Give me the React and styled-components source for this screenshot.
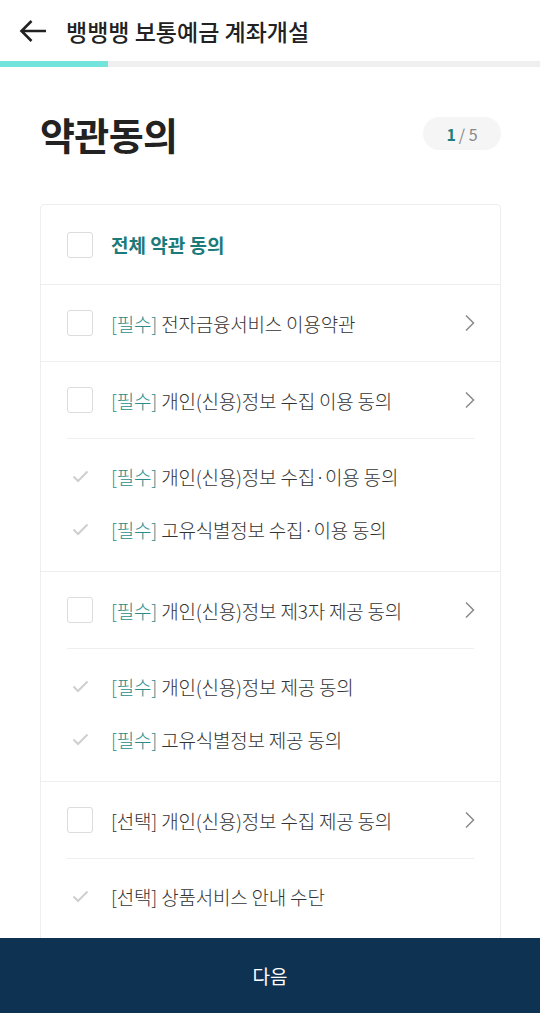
import React from "react";
import styled, { createGlobalStyle } from "styled-components";

const Global = createGlobalStyle`
  html, body { margin: 0; padding: 0; background: #fff; }
  body { font-family: "Noto Sans CJK KR", "Noto Sans", sans-serif; color: #333; }
  * { box-sizing: border-box; }
`;

const Page = styled.div`
  width: 540px;
  padding-bottom: 90px;
`;

const Header = styled.header`
  height: 61px;
  display: flex;
  align-items: center;
  padding-left: 19px;
  gap: 18px;
`;

const HeaderTitle = styled.h1`
  margin: 0;
  font-size: 23px;
  font-weight: 500;
  color: #222;
  letter-spacing: 0;
`;

const Progress = styled.div`
  height: 6px;
  background: #efefef;
`;

const ProgressFill = styled.div`
  height: 100%;
  background: #72e4dc;
`;

const Main = styled.main`
  padding: 0 39px 0 40px;
`;

const TitleRow = styled.div`
  display: flex;
  align-items: center;
  justify-content: space-between;
  height: 137px;
  padding-bottom: 4px;
`;

const PageTitle = styled.h2`
  margin: 0;
  font-size: 38px;
  font-weight: 700;
  color: #222;
  letter-spacing: -0.6px;
`;

const StepBadge = styled.div`
  width: 78px;
  height: 33px;
  border-radius: 17px;
  background: #f5f5f5;
  display: flex;
  align-items: center;
  justify-content: center;
  font-size: 16px;
  color: #888;
  gap: 3px;
`;

const StepCurrent = styled.span`
  color: #1f7f7f;
  font-weight: 700;
`;

const Card = styled.section`
  border: 1px solid #eeeeee;
  border-radius: 4px;
`;

const Group = styled.div`
  border-top: ${(p) => (p.$first ? "none" : "1px solid #eeeeee")};
`;

const Row = styled.div`
  display: flex;
  align-items: center;
  height: ${(p) => (p.$all ? "79px" : "76px")};
  padding: 0 25px 0 26px;
`;

const Box = styled.span`
  width: 26px;
  height: 26px;
  border: 1.5px solid #dcdcdc;
  border-radius: 3px;
  flex: none;
  background: #fff;
`;

const Label = styled.span`
  flex: 1;
  margin-left: 18px;
  font-size: 19px;
  font-weight: ${(p) => (p.$all ? 700 : 300)};
  color: ${(p) => (p.$all ? "#1b7a7a" : "#333")};
  letter-spacing: ${(p) => (p.$all ? "0" : "-0.2px")};
  white-space: nowrap;
`;

const Tag = styled.span`
  color: ${(p) => (p.$optional ? "#333" : "#2b8c8c")};
`;

const SubList = styled.div`
  margin: 0 26px 0 26px;
  border-top: 1px solid #eeeeee;
  padding: 11px 0 15px;
`;

const SubRow = styled.div`
  display: flex;
  align-items: center;
  height: 53px;
`;

const CheckMark = styled.span`
  width: 26px;
  display: flex;
  justify-content: center;
  flex: none;
`;

const Options = styled.div`
  display: flex;
  align-items: center;
  gap: 60px;
  padding: 8px 0 0 44px;
  height: 53px;
`;

const Option = styled.span`
  display: flex;
  align-items: center;
  gap: 10px;
  font-size: 17px;
  font-weight: 300;
  color: #333;
`;

const SmallBox = styled.span`
  width: 26px;
  height: 26px;
  border-radius: 6px;
  background: #eeeeee;
`;

const BottomButton = styled.button`
  position: fixed;
  left: 0;
  right: 0;
  bottom: 0;
  height: 75px;
  border: none;
  background: #0e3252;
  color: #fff;
  font-family: "Noto Sans CJK KR", sans-serif;
  font-size: 19px;
  font-weight: 400;
  padding: 0;
`;

const Chevron = () => (
  <svg width="10" height="18" viewBox="0 0 10 18" fill="none">
    <path d="M1 1.5 L8.5 9 L1 16.5" stroke="#8a8a8a" strokeWidth="1.5" />
  </svg>
);

const Check = () => (
  <svg width="17" height="13" viewBox="0 0 17 13" fill="none">
    <path d="M1.5 6.5 L6 11 L15.5 1.5" stroke="#cfcfcf" strokeWidth="2" />
  </svg>
);

const BackArrow = () => (
  <svg width="29" height="24" viewBox="0 0 29 24" fill="none">
    <path d="M27 12 H3 M12.5 2 L2.5 12 L12.5 22" stroke="#222" strokeWidth="2.6" />
  </svg>
);

const groups = [
  { tag: "[필수]", text: "전자금융서비스 이용약관", subs: [] },
  {
    tag: "[필수]",
    text: "개인(신용)정보 수집 이용 동의",
    subs: [
      { tag: "[필수]", text: "개인(신용)정보 수집·이용 동의" },
      { tag: "[필수]", text: "고유식별정보 수집·이용 동의" },
    ],
  },
  {
    tag: "[필수]",
    text: "개인(신용)정보 제3자 제공 동의",
    subs: [
      { tag: "[필수]", text: "개인(신용)정보 제공 동의" },
      { tag: "[필수]", text: "고유식별정보 제공 동의" },
    ],
  },
  {
    tag: "[선택]",
    optional: true,
    text: "개인(신용)정보 수집 제공 동의",
    subs: [{ tag: "[선택]", optional: true, text: "상품서비스 안내 수단" }],
    options: ["문자메시지", "전자우편"],
  },
];

export default function App() {
  return (
    <Page>
      <Global />
      <Header>
        <BackArrow />
        <HeaderTitle>뱅뱅뱅 보통예금 계좌개설</HeaderTitle>
      </Header>
      <Progress>
        <ProgressFill style={{ width: `${(1 / 5) * 100}%` }} />
      </Progress>
      <Main>
        <TitleRow>
          <PageTitle>약관동의</PageTitle>
          <StepBadge>
            <StepCurrent>1</StepCurrent>/ 5
          </StepBadge>
        </TitleRow>
        <Card>
          <Group $first>
            <Row $all>
              <Box />
              <Label $all>전체 약관 동의</Label>
            </Row>
          </Group>
          {groups.map((g, i) => (
            <Group key={i}>
              <Row>
                <Box />
                <Label>
                  <Tag $optional={g.optional}>{g.tag}</Tag> {g.text}
                </Label>
                <Chevron />
              </Row>
              {g.subs.length > 0 && (
                <SubList>
                  {g.subs.map((s, j) => (
                    <SubRow key={j}>
                      <CheckMark>
                        <Check />
                      </CheckMark>
                      <Label>
                        <Tag $optional={s.optional}>{s.tag}</Tag> {s.text}
                      </Label>
                    </SubRow>
                  ))}
                  {g.options && (
                    <Options>
                      {g.options.map((o) => (
                        <Option key={o}>
                          <SmallBox />
                          {o}
                        </Option>
                      ))}
                    </Options>
                  )}
                </SubList>
              )}
            </Group>
          ))}
        </Card>
      </Main>
      <BottomButton>다음</BottomButton>
    </Page>
  );
}
